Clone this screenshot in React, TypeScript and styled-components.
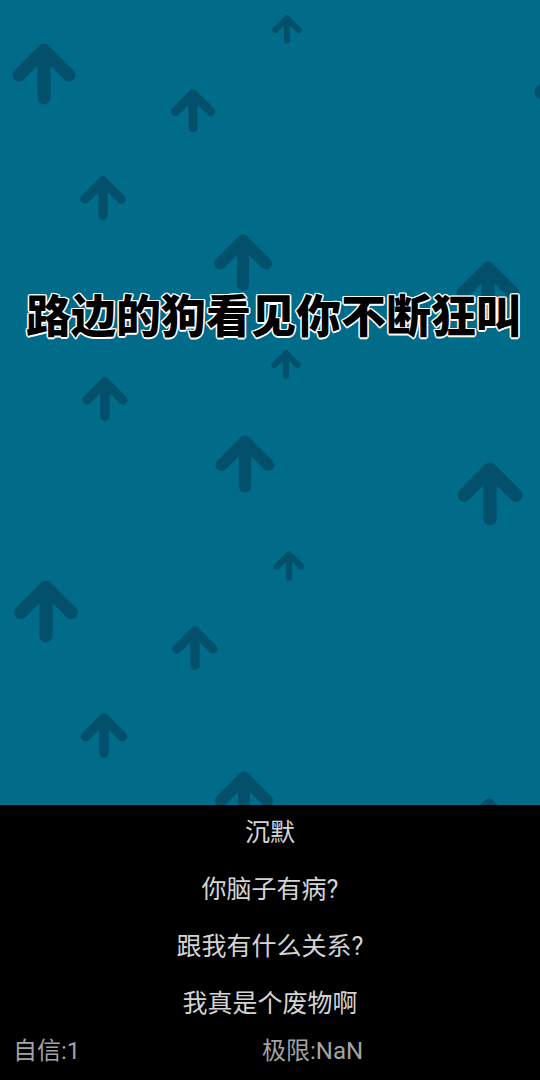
import React from 'react';
import styled, {createGlobalStyle} from 'styled-components';

type ArrowSpec = {cx: number; top: number; w: number};

// background arrows: center x, top edge, outer width (px)
const ARROWS: ArrowSpec[] = [
  {cx: 44, top: 43, w: 64},
  {cx: 287, top: 15, w: 30},
  {cx: 193, top: 89, w: 45},
  {cx: 103, top: 176, w: 46},
  {cx: 243, top: 234, w: 59},
  {cx: 488, top: 261, w: 64},
  {cx: 566, top: 60, w: 64},
  {cx: 286, top: 350, w: 30},
  {cx: 105, top: 377, w: 46},
  {cx: 245, top: 435, w: 60},
  {cx: 490, top: 462, w: 66},
  {cx: 46, top: 580, w: 65},
  {cx: 289, top: 551, w: 31},
  {cx: 195, top: 626, w: 46},
  {cx: 104, top: 713, w: 47},
  {cx: 244, top: 771, w: 59},
  {cx: 489, top: 798, w: 64}
];

const OPTIONS = ['沉默', '你脑子有病?', '跟我有什么关系?', '我真是个废物啊'];

const GlobalStyle = createGlobalStyle`
  html, body {
    margin: 0;
    padding: 0;
    background: #000;
  }
  body {
    font-family: Roboto, "Noto Sans CJK SC", "Noto Sans", sans-serif;
  }
`;

const Screen = styled.div`
  width: 540px;
  height: 1080px;
  display: flex;
  flex-direction: column;
  overflow: hidden;
`;

const Stage = styled.div`
  position: relative;
  height: 805px;
  flex-shrink: 0;
  background: #006c8a;
  overflow: hidden;
  display: flex;
  flex-direction: column;
  align-items: center;
  padding: 291px 0 0 7px;
  box-sizing: border-box;
`;

const Pattern = styled.svg`
  position: absolute;
  inset: 0;
  pointer-events: none;
`;

const Title = styled.h1`
  position: relative;
  margin: 0;
  font-family: "Noto Sans CJK SC", sans-serif;
  font-weight: 900;
  font-size: 45px;
  line-height: 45px;
  color: #000;
  white-space: nowrap;
  text-shadow:
    1.5px 0 0 #fff, -1.5px 0 0 #fff, 0 1.5px 0 #fff, 0 -1.5px 0 #fff,
    1.1px 1.1px 0 #fff, -1.1px 1.1px 0 #fff, 1.1px -1.1px 0 #fff, -1.1px -1.1px 0 #fff;
`;

const Panel = styled.div`
  flex: 1;
  background: #000;
  display: flex;
  flex-direction: column;
`;

const Option = styled.button`
  height: 57px;
  padding: 0 0 3px;
  border: 0;
  background: transparent;
  color: #d4d4d4;
  font-family: Roboto, "Noto Sans CJK SC", sans-serif;
  font-size: 25px;
  line-height: 25px;
  text-align: center;
  cursor: pointer;
`;

const Stats = styled.div`
  display: grid;
  grid-template-columns: 249px 1fr;
  align-items: center;
  height: 36px;
  padding-left: 13px;
`;

const Stat = styled.span`
  color: #a3a3a3;
  font-family: Roboto, "Noto Sans CJK SC", sans-serif;
  font-size: 24px;
  line-height: 24px;
`;

function ArrowPattern() {
  return (
    <Pattern width="540" height="805" viewBox="0 0 540 805">
      {ARROWS.map((a, i) => {
        const s = a.w / 64;
        return (
          <path
            key={i}
            transform={`translate(${a.cx - a.w / 2} ${a.top}) scale(${s})`}
            d="M7 32 L32 7 L57 32 M32 7 L32 55"
            fill="none"
            stroke="#03506d"
            strokeWidth={13}
            strokeLinecap="round"
            strokeLinejoin="round"
          />
        );
      })}
    </Pattern>
  );
}

export default function App() {
  return (
    <>
      <GlobalStyle />
      <Screen>
        <Stage>
          <ArrowPattern />
          <Title>路边的狗看见你不断狂叫</Title>
        </Stage>
        <Panel>
          {OPTIONS.map(o => (
            <Option key={o}>{o}</Option>
          ))}
          <Stats>
            <Stat>自信:1</Stat>
            <Stat>极限:NaN</Stat>
          </Stats>
        </Panel>
      </Screen>
    </>
  );
}
